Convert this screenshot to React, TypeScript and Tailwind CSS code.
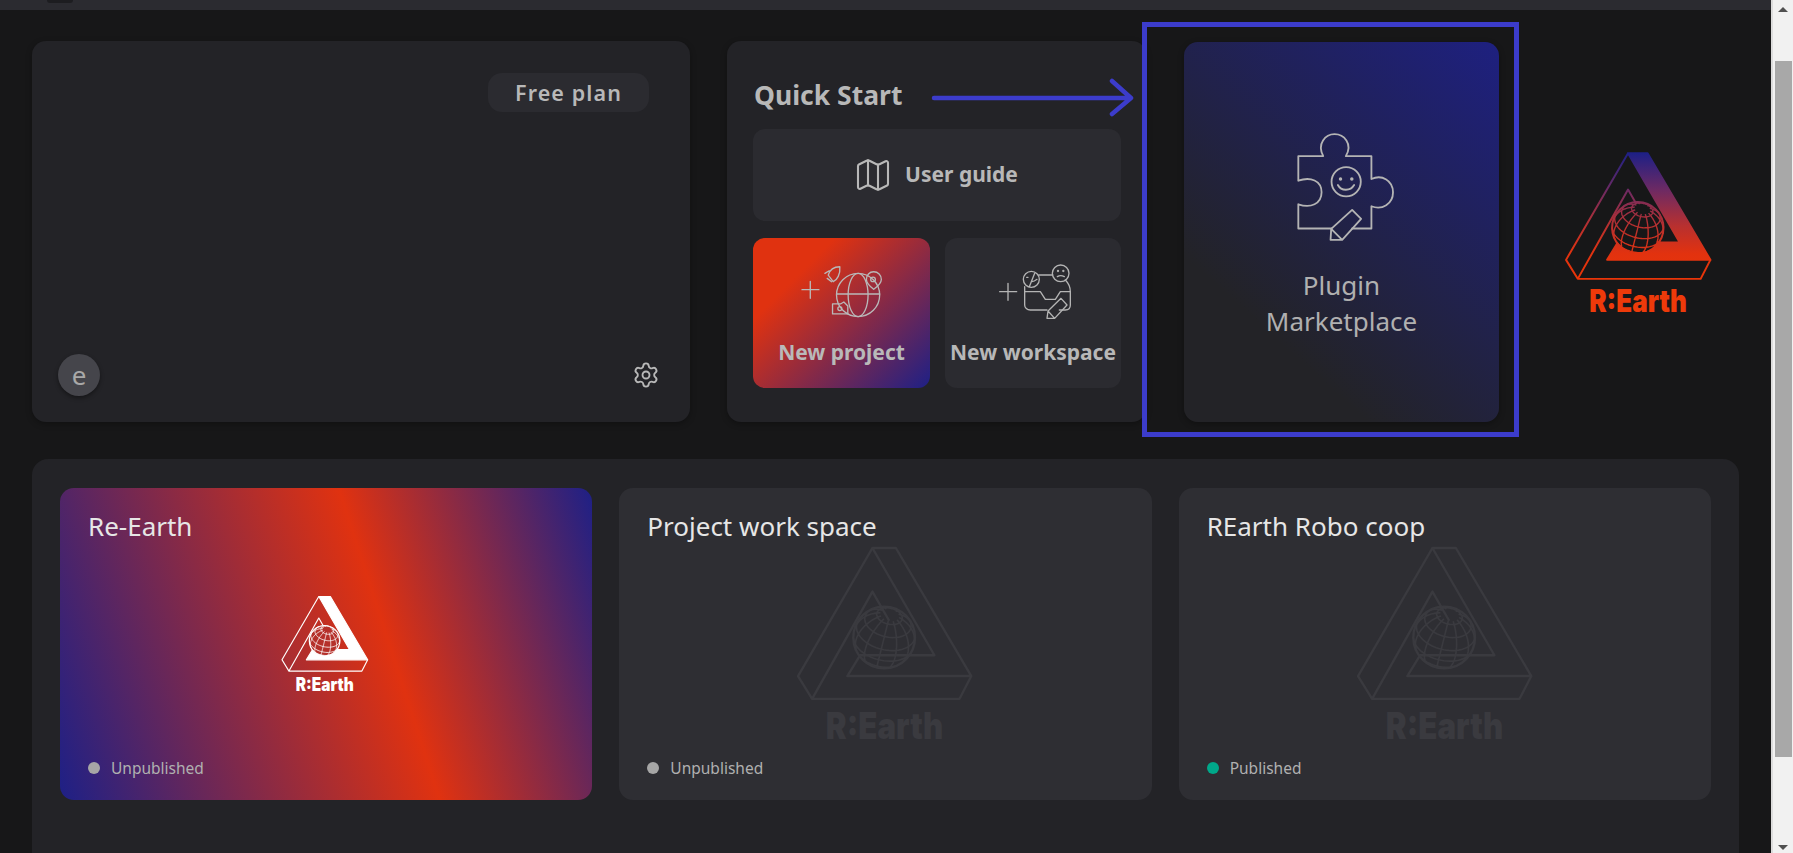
import { Map as MapIcon, Settings } from "lucide-react";

const font = { fontFamily: '"Noto Sans", sans-serif' };

function project(lat: number, lon: number) {
  const tilt = (38 * Math.PI) / 180;
  const rot = (-14 * Math.PI) / 180;
  const r = 92;
  const x0 = Math.cos(lat) * Math.sin(lon);
  const y0 = Math.sin(lat);
  const z0 = Math.cos(lat) * Math.cos(lon);
  const y1 = y0 * Math.cos(tilt) - z0 * Math.sin(tilt);
  const z1 = y0 * Math.sin(tilt) + z0 * Math.cos(tilt);
  const x2 = x0 * Math.cos(rot) - y1 * Math.sin(rot);
  const y2 = x0 * Math.sin(rot) + y1 * Math.cos(rot);
  return { x: 315 + r * x2, y: 322 - r * y2, z: z1 };
}

function globePaths() {
  let d = "";
  const draw = (pts: { x: number; y: number; z: number }[]) => {
    let pen = false;
    for (const p of pts) {
      if (p.z < 0) {
        pen = false;
        continue;
      }
      d += `${pen ? "L" : "M"}${p.x.toFixed(1)} ${p.y.toFixed(1)}`;
      pen = true;
    }
  };
  for (let m = 0; m < 12; m++) {
    const lon = (m * Math.PI) / 6;
    const pts = [];
    for (let i = -24; i <= 24; i++) pts.push(project((i / 30) * (Math.PI / 2), lon));
    draw(pts);
  }
  for (const la of [-60, -35, -10, 15, 40, 65]) {
    const pts = [];
    for (let i = 0; i <= 72; i++) pts.push(project((la * Math.PI) / 180, (i / 36) * Math.PI));
    draw(pts);
  }
  return d;
}
const GLOBE = globePaths();

function Logo({
  id,
  width,
  stroke,
  fill,
  text,
  bg,
  sw,
  gradient,
}: {
  id: string;
  width: number;
  stroke: string;
  fill: string;
  text: string;
  bg: string;
  sw: number;
  gradient?: boolean;
}) {
  const c = gradient ? `url(#${id})` : stroke;
  const f = gradient ? `url(#${id})` : fill;
  return (
    <svg viewBox="40 40 555 630" width={width} height={(width * 630) / 555}>
      {gradient && (
        <defs>
          <linearGradient id={id} gradientUnits="userSpaceOnUse" x1="0" y1="55" x2="0" y2="505">
            <stop offset="0" stopColor="#1e2086" />
            <stop offset="0.3" stopColor="#6f2a62" />
            <stop offset="0.58" stopColor="#b8302f" />
            <stop offset="0.8" stopColor="#e2320f" />
            <stop offset="1" stopColor="#ea3508" />
          </linearGradient>
        </defs>
      )}
      <path
        d="M280 55H350L575 437H205L243 375H465Z"
        fill={f}
        stroke={c}
        strokeWidth={sw}
        strokeLinejoin="round"
      />
      <path
        d="M280 55L58 437L100 505H540L575 437M100 505L280 185L330 272"
        fill="none"
        stroke={c}
        strokeWidth={sw}
        strokeLinejoin="round"
      />
      <circle cx="315" cy="322" r="92" fill={bg} stroke={c} strokeWidth={sw} />
      <path d={GLOBE} fill="none" stroke={c} strokeWidth={sw * 0.7} />
      <text
        x="316"
        y="625"
        textAnchor="middle"
        textLength="350"
        lengthAdjust="spacingAndGlyphs"
        fontFamily="Inter, sans-serif"
        fontWeight="900"
        fontSize="110"
        fill={text}
      >
        R:Earth
      </text>
    </svg>
  );
}

function PuzzleIcon() {
  return (
    <svg
      viewBox="490 358 310 342"
      width={103}
      height={114}
      fill="none"
      stroke="#b4b4b4"
      strokeWidth={5.5}
      strokeLinejoin="round"
      strokeLinecap="round"
    >
      <path d="M603 654H503V581C540 594 573 580 573 545C573 510 540 497 503 510V436H578C558 398 585 370 612 370C640 370 668 398 646 436H723V505C755 490 788 510 788 545C788 580 755 600 723 587V654H665" />
      <circle cx="647" cy="513" r="44" />
      <circle cx="630" cy="505" r="2.5" fill="#b4b4b4" />
      <circle cx="664" cy="505" r="2.5" fill="#b4b4b4" />
      <path d="M622 523C632 542 660 542 671 523" />
      <path d="M600 688H635L692 625L665 598L602 655ZM602 655L635 688" />
    </svg>
  );
}

function NewProjectIcon() {
  return (
    <svg
      viewBox="240 732 250 162"
      width={83}
      height={54}
      fill="none"
      stroke="#b9b9b9"
      strokeWidth={4}
      strokeLinecap="round"
      strokeLinejoin="round"
    >
      <path d="M246 809H297M271 784V835" />
      <circle cx="415" cy="825" r="65" />
      <ellipse cx="415" cy="825" rx="30" ry="65" />
      <path d="M350 822H480" />
      <path d="M360 740C345 740 330 748 325 765L340 785C352 780 362 762 360 740ZM315 760L328 752M322 775L335 785" />
      <path d="M462 808C475 798 485 790 485 778C485 765 475 755 462 755C449 755 440 765 440 778C440 790 450 798 462 808Z" />
      <circle cx="460" cy="778" r="7" />
      <path d="M338 852H362L372 846L384 858V882H338Z" />
      <circle cx="360" cy="866" r="6" />
    </svg>
  );
}

function NewWorkspaceIcon() {
  return (
    <svg
      viewBox="828 732 225 168"
      width={75}
      height={56}
      fill="none"
      stroke="#b4b4b4"
      strokeWidth={4}
      strokeLinecap="round"
      strokeLinejoin="round"
    >
      <path d="M833 815H884M858 790V841" />
      <path d="M950 765H992M1030 780C1040 790 1045 800 1045 815V855C1045 865 1038 870 1030 870H1012M975 870H925C915 870 908 863 908 855V800" />
      <path d="M908 815H955L970 838H1000L1015 815H1045" />
      <circle cx="928" cy="778" r="24" />
      <path d="M938 760L922 800M914 772L918 772M930 785C935 785 940 782 945 778" />
      <circle cx="1016" cy="760" r="25" />
      <circle cx="1008" cy="753" r="1.5" />
      <circle cx="1024" cy="753" r="1.5" />
      <path d="M1006 770C1012 766 1020 766 1027 770" />
      <path d="M975 895H998L1035 855L1017 835L978 873ZM978 873L998 895" />
    </svg>
  );
}

function ProjectCard({
  title,
  status,
  dot,
  featured,
}: {
  title: string;
  status: string;
  dot: string;
  featured?: boolean;
}) {
  return (
    <div
      className={
        featured
          ? "relative flex h-[312px] flex-col justify-between rounded-[14px] bg-[linear-gradient(72deg,#1e2086_0%,#e03210_60%,#1e2086_100%)] px-7 pt-[20px] pb-[21px]"
          : "relative flex h-[312px] flex-col justify-between rounded-[14px] bg-[#2e2e33] px-7 pt-[20px] pb-[21px]"
      }
    >
      <div className="absolute inset-0 flex items-center justify-center">
        {featured ? (
          <div className="mt-[5px] ml-[-2px]">
            <Logo id="lw" width={92} stroke="#ffffff" fill="#ffffff" text="#ffffff" bg="#b5302a" sw={7} />
          </div>
        ) : (
          <div className="mt-[10px]">
            <Logo id={title.replace(/ /g, "-")} width={186} stroke="#3a3a3f" fill="none" text="#3a3a3f" bg="none" sw={7} />
          </div>
        )}
      </div>
      <div className="relative text-[26px] leading-[36px] text-[#e6e6e6]">{title}</div>
      <div className="relative flex items-center gap-[11px] text-[15.5px] leading-[22px] text-[#b0b0b0]">
        <span className={dot + " h-3 w-3 rounded-full"} />
        <span>{status}</span>
      </div>
    </div>
  );
}

export default function App() {
  return (
    <div className="flex h-screen w-full overflow-hidden bg-[#f1f1f1]" style={font}>
      <div className="relative flex w-[1771px] flex-col bg-[#171718]">
        <div className="flex h-[10px] shrink-0 bg-[#2b2b30] pl-[47px]">
          <div className="h-[3px] w-[26px] rounded-b-full bg-[#1d1d20]" />
        </div>

        <div className="mt-[31px] flex shrink-0 items-start pl-8">
          <div className="flex h-[381px] w-[658px] flex-col justify-between rounded-[14px] bg-[#232327] pt-8 pr-[41px] pb-[26px] pl-[26px] shadow-[0_2px_6px_rgba(0,0,0,0.3)]">
            <div className="flex justify-end">
              <div className="flex h-[39px] w-[161px] items-center justify-center rounded-[14px] bg-[#2b2b30] pt-[2px] text-[21.5px] font-semibold tracking-[1.1px] text-[#b8b8b8]">
                Free plan
              </div>
            </div>
            <div className="flex items-center justify-between">
              <div className="flex h-[42px] w-[42px] items-center justify-center rounded-full bg-[#45454b] text-[26px] text-[#a8a8a8] shadow-[0_2px_4px_rgba(0,0,0,0.4)]">
                e
              </div>
              <Settings size={28} strokeWidth={1.6} className="mr-[-11px] text-[#b8b8b8]" />
            </div>
          </div>

          <div className="ml-[37px] flex h-[381px] w-[419px] flex-col rounded-[14px] bg-[#232327] px-[26px] pt-[39px] shadow-[0_2px_6px_rgba(0,0,0,0.3)]">
            <div className="ml-px h-[49px] text-[26.5px] leading-[30px] font-bold text-[#b8b8b8]">Quick Start</div>
            <div className="flex h-[92px] w-[368px] items-center justify-center gap-[12px] rounded-[12px] bg-[#2b2b30] text-[21px] font-bold text-[#b8b8b8]">
              <MapIcon size={40} strokeWidth={1.25} className="ml-[-3px]" />
              <span>User guide</span>
            </div>
            <div className="mt-[17px] flex w-[368px] gap-[15px]">
              <div className="flex h-[150px] w-[177px] flex-col items-center rounded-[12px] bg-[linear-gradient(135deg,#e03210_25%,#1e2086_100%)] pt-[26px] text-[21px] font-bold text-[#b9b9b9]">
                <div className="ml-[-1px]">
                  <NewProjectIcon />
                </div>
                <div className="mt-[19px]">New project</div>
              </div>
              <div className="flex h-[150px] w-[176px] flex-col items-center rounded-[12px] bg-[#2b2b30] pt-[25px] text-[21px] font-bold whitespace-nowrap text-[#b8b8b8]">
                <div className="mt-[1px] ml-[4px]">
                  <NewWorkspaceIcon />
                </div>
                <div className="mt-[17px]">New workspace</div>
              </div>
            </div>
          </div>

          <div className="mt-[1px] ml-[38px] flex h-[380px] w-[315px] flex-col items-center rounded-[14px] bg-[linear-gradient(222deg,#1e2080_0%,#232327_75%)] pt-[88px] text-center text-[26px] leading-[36px] text-[#b0b0b0] shadow-[0_2px_6px_rgba(0,0,0,0.3)]">
            <div className="ml-[7px]">
              <PuzzleIcon />
            </div>
            <div className="mt-[23px]">
              Plugin
              <br />
              Marketplace
            </div>
          </div>

          <div className="mt-[108px] ml-[62px]">
            <Logo id="lc" width={155} stroke="" fill="" text="#ee3a0a" bg="#171718" sw={7} gradient />
          </div>
        </div>

        <div className="mt-[37px] ml-8 w-[1707px] flex-1 rounded-t-[16px] bg-[#232327] px-7 pt-[29px]">
          <div className="grid grid-cols-3 gap-[27px]">
            <ProjectCard title="Re-Earth" status="Unpublished" dot="bg-[#a6a6a6]" featured />
            <ProjectCard title="Project work space" status="Unpublished" dot="bg-[#a6a6a6]" />
            <ProjectCard title="REarth Robo coop" status="Published" dot="bg-[#00a88a]" />
          </div>
        </div>

        {/* annotation drawn over the page */}
        <svg className="absolute top-[78px] left-[930px]" width="206" height="40" fill="none" stroke="#3c3ccb" strokeWidth="4.5" strokeLinecap="round" strokeLinejoin="round">
          <path d="M4 20H200M182 3L201 20L182 36" />
        </svg>
        <div className="pointer-events-none absolute top-[22px] left-[1142px] h-[415px] w-[377px] border-[5px] border-[#3c3ccb]" />
      </div>

      <div className="flex w-[22px] flex-col items-center border-l-2 border-[#dcdcdc] bg-[#f1f1f1]">
        <svg className="mt-[7px]" width="10" height="5" viewBox="0 0 10 5">
          <path d="M5 0L10 5H0Z" fill="#505050" />
        </svg>
        <div className="mt-[49px] h-[696px] w-[17px] bg-[#a8a8a8]" />
        <svg className="mt-[88px]" width="10" height="5" viewBox="0 0 10 5">
          <path d="M0 0H10L5 5Z" fill="#505050" />
        </svg>
      </div>
    </div>
  );
}
